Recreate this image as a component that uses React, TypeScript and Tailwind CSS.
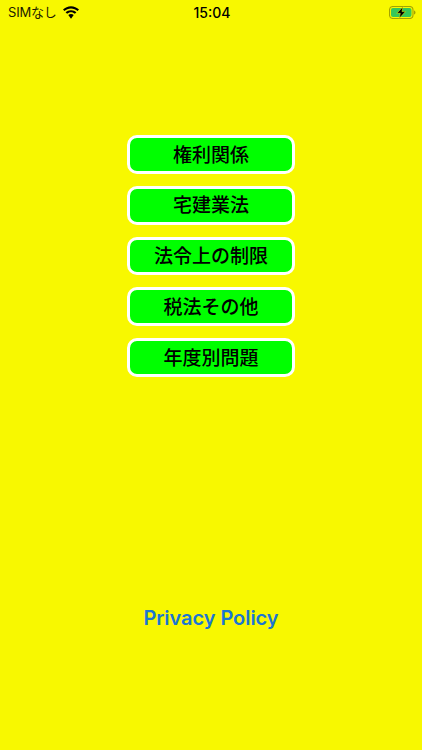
const menus = ['権利関係', '宅建業法', '法令上の制限', '税法その他', '年度別問題'];

function Wifi() {
  return (
    <svg width="18" height="13" viewBox="0 0 18 13" fill="#000">
      <path d="M9 2.4c2.5 0 4.8 1 6.500 2.600l1.500-1.500C14.900 1.500 12.100.2 9 .2S3.100 1.500 1 3.500L2.500 5C4.200 3.400 6.500 2.400 9 2.400z" />
      <path d="M9 6.300c1.500 0 2.800.6 3.900 1.500l1.500-1.500C13 5 11.100 4.200 9 4.200s-4 .8-5.400 2.100l1.500 1.500C6.200 6.900 7.500 6.300 9 6.300z" />
      <path d="M9 8.100c-1 0-1.900.4-2.700 1L9 12.800l2.700-3.700c-.7-.6-1.700-1-2.700-1z" />
    </svg>
  );
}

function Battery() {
  return (
    <svg width="27" height="13" viewBox="0 0 27 13">
      <rect x="0.500" y="0.500" width="23.500" height="12" rx="3.500" fill="none" stroke="#a3a300" strokeWidth="1.100" />
      <rect x="2" y="2" width="20.500" height="9" rx="2" fill="#34c759" />
      <path d="M25 4.500c.9.300 1.500 1.100 1.500 2s-.6 1.700-1.500 2z" fill="#a3a300" />
      <path d="M14 .8 7.800 7.300h3.500l-1 5 6.200-6.700H13z" fill="#000" stroke="#f8f800" strokeWidth="0.500" />
    </svg>
  );
}

export default function App() {
  return (
    <div className="flex h-[750px] w-full flex-col overflow-hidden bg-[#f8f800] font-['Liberation_Sans','Noto_Sans_CJK_JP',sans-serif]">
      <div className="flex h-[24px] items-center justify-between pl-[8px] pr-[6px] pt-[1px] text-black">
        <div className="flex w-[140px] items-center gap-[5px]">
          <span className="font-['Inter','Noto_Sans_CJK_JP',sans-serif] text-[13px] tracking-[-0.2px] text-[#1c1c00]">SIMなし</span>
          <Wifi />
        </div>
        <span className="font-['Inter',sans-serif] text-[14px] font-medium">15:04</span>
        <div className="flex w-[140px] justify-end">
          <Battery />
        </div>
      </div>

      <div className="mt-[111px] flex flex-col items-center gap-[12px]">
        {menus.map((label) => (
          <button
            key={label}
            className="flex h-[38.75px] w-[168px] items-center justify-center rounded-[10px] border-[3px] border-white bg-[#00ff00] pb-[1px] font-['Noto_Sans_CJK_JP',sans-serif] text-[19px] font-medium text-black"
          >
            {label}
          </button>
        ))}
      </div>

      <div className="mt-[226px] text-center font-['Inter',sans-serif] text-[20px] font-semibold tracking-[-0.05px] text-[#1b76d2]">
        Privacy Policy
      </div>
    </div>
  );
}
